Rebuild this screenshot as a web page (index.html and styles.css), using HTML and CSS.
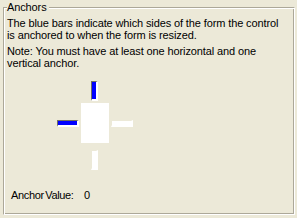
FILE: index.html
```html
<!DOCTYPE html>
<html>
<head>
<meta charset="utf-8">
<link rel="stylesheet" href="styles.css">
</head>
<body>
<fieldset class="group">
  <legend class="group-title">Anchors</legend>
  <p class="desc">The blue bars indicate which sides of the form the control<br>is anchored to when the form is resized.</p>
  <p class="desc note">Note: You must have at least one horizontal and one<br>vertical anchor.</p>
  <div class="anchor-editor">
    <div class="bar bar-v bar-top on"></div>
    <div class="bar bar-h bar-left on"></div>
    <div class="control"></div>
    <div class="bar bar-h bar-right"></div>
    <div class="bar bar-v bar-bottom"></div>
  </div>
  <div class="value-row"><span class="value-label">Anchor Value:</span><span class="value">0</span></div>
</fieldset>
</body>
</html>
```

FILE: styles.css
```css
html, body {
  margin: 0;
  padding: 0;
}
body {
  width: 297px;
  height: 218px;
  overflow: hidden;
  background: #ece9d8;
  color: #000;
  font-family: "Liberation Sans", Arial, sans-serif;
  font-size: 11px;
  line-height: 12px;
  letter-spacing: -0.12px;
}
.group {
  box-sizing: border-box;
  width: 292px;
  height: 214px;
  margin: 1px 2px 3px 3px;
  padding: 3px 3px 0 3px;
  min-width: 0;
  border-style: solid;
  border-width: 1px;
  border-color: #aca899 #fff #fff #aca899;
  box-shadow: inset 1px 1px 0 #fff, inset -1px -1px 0 #aca899;
}
.group-title {
  padding: 0 2px 0 0;
  line-height: 13px;
  background: #ece9d8;
}
.desc {
  margin: 0;
}
.note {
  margin-top: 4px;
}
.anchor-editor {
  display: grid;
  grid-template-columns: 22px 2px 28px 2px 22px;
  grid-template-rows: 20px 2px 40px 7px 20px;
  width: 76px;
  margin: 12px 0 0 50px;
}
.bar {
  box-sizing: border-box;
  border-style: solid;
  border-width: 1px 2px 2px 1px;
  border-color: transparent #fff #fff transparent;
  background: #fff;
  background-clip: padding-box;
}
.bar.on {
  border-color: #716f64 #fff #fff #716f64;
  background: #0000ff;
  background-clip: padding-box;
}
.bar-v {
  width: 7px;
  height: 20px;
  grid-column: 3;
  margin-left: 10px;
}
.bar-h {
  width: 22px;
  height: 7px;
  grid-row: 3;
  align-self: start;
  margin-top: 17px;
}
.bar-top { grid-row: 1; }
.bar-bottom { grid-row: 5; }
.bar-left { grid-column: 1; }
.bar-right { grid-column: 5; }
.control {
  grid-column: 3;
  grid-row: 3;
  background: #fff;
}
.value-row {
  margin-top: 19px;
  padding-left: 4px;
  display: flex;
}
.value-label {
  width: 73px;
  letter-spacing: -0.35px;
  word-spacing: -1.2px;
}
```
